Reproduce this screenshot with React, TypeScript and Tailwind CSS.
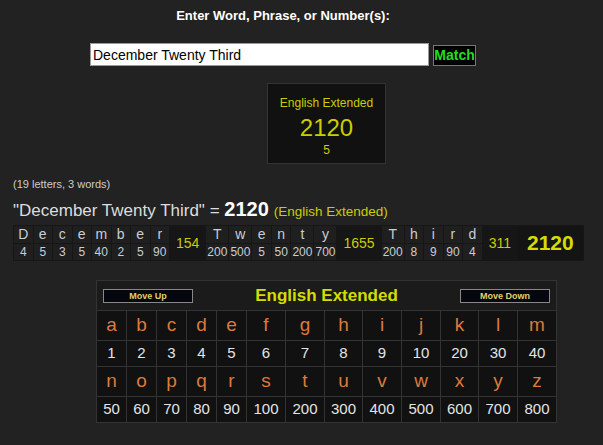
import React from "react";

const words = [
  { letters: ["D", "e", "c", "e", "m", "b", "e", "r"], values: [4, 5, 3, 5, 40, 2, 5, 90], total: 154 },
  { letters: ["T", "w", "e", "n", "t", "y"], values: [200, 500, 5, 50, 200, 700], total: 1655 },
  { letters: ["T", "h", "i", "r", "d"], values: [200, 8, 9, 90, 4], total: 311 },
];

const chartRows = [
  {
    letters: ["a", "b", "c", "d", "e", "f", "g", "h", "i", "j", "k", "l", "m"],
    values: [1, 2, 3, 4, 5, 6, 7, 8, 9, 10, 20, 30, 40],
  },
  {
    letters: ["n", "o", "p", "q", "r", "s", "t", "u", "v", "w", "x", "y", "z"],
    values: [50, 60, 70, 80, 90, 100, 200, 300, 400, 500, 600, 700, 800],
  },
];

function Breakdown() {
  return (
    <table className="ml-[13px] mt-[3px] border-separate border-spacing-[1px] bg-[#161616]">
      <tbody>
        <tr>
          {words.map((w, wi) => (
            <React.Fragment key={wi}>
              {w.letters.map((l, li) => (
                <td key={li} className="h-[17px] w-[18.5px] min-w-[18.5px] bg-[#1f1f1f] px-[1px] text-center text-[14px] leading-[17px] text-[#c9cdd6]">
                  {l}
                </td>
              ))}
              <td rowSpan={2} className="px-[6px] text-center text-[14px] text-[#cccc00]">
                {w.total}
              </td>
            </React.Fragment>
          ))}
          <td rowSpan={2} className="bg-[#141414] px-[9px] text-center text-[21px] font-bold text-[#d4dc00]">
            2120
          </td>
        </tr>
        <tr>
          {words.map((w, wi) =>
            w.values.map((v, vi) => (
              <td key={`${wi}-${vi}`} className="h-[16px] w-[18.5px] min-w-[18.5px] bg-[#1f1f1f] px-[1px] text-center text-[12px] leading-[16px] text-[#c9cdd6]">
                {v}
              </td>
            ))
          )}
        </tr>
      </tbody>
    </table>
  );
}

function CipherChart() {
  return (
    <div className="ml-[96px] mt-[19px] w-[461px] border border-[#333] bg-[#1b1b1b]">
      {/* Header */}
      <div className="flex h-[29px] items-center justify-between px-[6px]">
        <button className="h-[14px] w-[90px] border border-[#888] bg-[#06060e] text-[9px] font-bold leading-[12px] text-[#e2cf6a]">
          Move Up
        </button>
        <span className="text-[17px] font-bold text-[#d4dc00]">English Extended</span>
        <button className="h-[14px] w-[90px] border border-[#888] bg-[#06060e] text-[9px] font-bold leading-[12px] text-[#e2cf6a]">
          Move Down
        </button>
      </div>
      <div className="grid grid-cols-[29px_29px_29px_29px_29px_38px_38px_37px_38px_38px_37px_38px_38px] gap-px border-t border-[#333] bg-[#333]">
        {chartRows.map((row, ri) => (
          <React.Fragment key={ri}>
            {row.letters.map((l) => (
              <div key={l} className="flex h-[29px] items-center justify-center bg-[#111] text-[19px] text-[#dc7a3c]">
                {l}
              </div>
            ))}
            {row.values.map((v) => (
              <div key={v} className="flex h-[25px] items-center justify-center bg-[#111] text-[15px] text-[#e4e4e4]">
                {v}
              </div>
            ))}
          </React.Fragment>
        ))}
      </div>
    </div>
  );
}

export default function App() {
  return (
    <div className="min-h-screen bg-[#222] pb-4 font-['Liberation_Sans',Arial,sans-serif] text-[#ddd]">
      <div className="w-[566px] pt-[8px] text-center text-[13px] font-bold leading-[16px] text-white">
        Enter Word, Phrase, or Number(s):
      </div>

      <div className="ml-[90px] mt-[19px] flex items-start">
        <input
          readOnly
          value="December Twenty Third"
          className="h-[23px] w-[339px] border border-[#999] bg-white px-[2px] text-[14px] text-black outline-none"
        />
        <button className="ml-[4px] mt-[2px] h-[21px] w-[43px] border border-[#777] bg-black text-[14px] font-bold leading-[19px] text-[#22dd22]">
          Match
        </button>
      </div>

      <div className="ml-[267px] mt-[17px] flex h-[81px] w-[119px] flex-col items-center border border-[#333] bg-[#111] text-[#cccc00]">
        <div className="mt-[12px] text-[12px] leading-[14px]">English Extended</div>
        <div className="mt-[5px] text-[24px] leading-[26px]">2120</div>
        <div className="mt-[2px] text-[12px] leading-[14px]">5</div>
      </div>

      <div className="ml-[13px] mt-[14px] text-[11px] leading-[13px] text-[#ccc]">(19 letters, 3 words)</div>

      <div className="ml-[13px] mt-[8px] flex items-baseline leading-[20px]">
        <span className="text-[17px] text-[#ddd]">"December Twenty Third" =&nbsp;</span>
        <span className="text-[20px] font-bold text-white">2120</span>
        <span className="ml-[5px] text-[13.5px] text-[#cccc00]">(English Extended)</span>
      </div>

      <Breakdown />

      <CipherChart />
    </div>
  );
}
